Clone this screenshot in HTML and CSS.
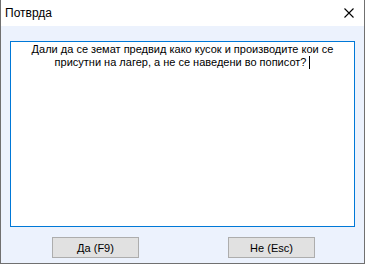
FILE: index.html
```html
<!DOCTYPE html>
<html lang="mk">
    <head>
        <meta charset="utf-8">
        <title>Потврда</title>
        <link rel="stylesheet" href="styles.css">
    </head>
    <body>
        <div class="window">
            <div class="titlebar">
                <span class="title">Потврда</span>
                <svg class="close" width="10" height="10" viewBox="0 0 10 10">
                    <path d="M0.5 0.5 L9.5 9.5 M9.5 0.5 L0.5 9.5" stroke="#000" stroke-width="1.1" fill="none"/>
                </svg>
            </div>
            <div class="content">
                <div class="message">Дали да се земат предвид како кусок и производите кои се присутни на лагер, а не се наведени во пописот?<span class="caret"></span></div>
            </div>
            <div class="buttons">
                <button class="btn">Да (F9)</button>
                <button class="btn">Не (Esc)</button>
            </div>
        </div>
    </body>
</html>
```

FILE: styles.css
```css
html, body {
    margin: 0;
    padding: 0;
}

body {
    font-family: "Liberation Sans", Arial, sans-serif;
    font-size: 11px;
    color: #000;
}

.window {
    width: 365px;
    height: 264px;
    box-sizing: border-box;
    border: 1px solid #707070;
    border-top: none;
    background-color: #ecf2fd;
    display: flex;
    flex-direction: column;
}

.titlebar {
    height: 26px;
    background-color: #fff;
    display: flex;
    align-items: center;
    justify-content: space-between;
    padding: 0 10px 0 4px;
}

.title {
    font-size: 12px;
}

.content {
    padding: 15px 9px 0 9px;
}

.message {
    height: 186px;
    box-sizing: border-box;
    border: 1px solid #0078d7;
    background-color: #fff;
    padding: 1px 10px;
    text-align: center;
    line-height: 13px;
}

.caret {
    display: inline-block;
    width: 1px;
    height: 13px;
    background-color: #000;
    margin-left: 3px;
    vertical-align: top;
}

.buttons {
    display: flex;
    gap: 89px;
    padding-left: 51px;
    margin-top: 10px;
}

.btn {
    width: 87px;
    height: 21px;
    box-sizing: border-box;
    border: 1px solid #adadad;
    background-color: #e1e1e1;
    font-family: "Liberation Sans", Arial, sans-serif;
    font-size: 11px;
    color: #000;
    padding: 0;
}
```
